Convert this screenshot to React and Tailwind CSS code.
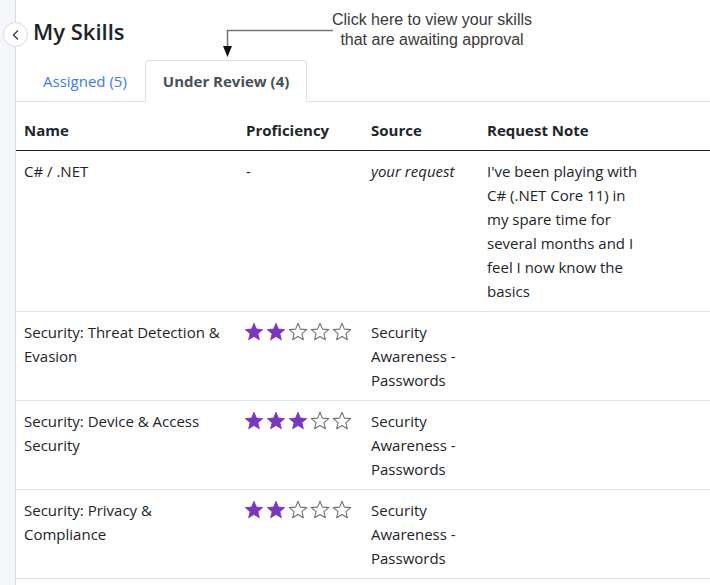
import React from "react";

const font = { fontFamily: '"Open Sans", "Noto Sans", sans-serif' };

function Star({ filled }) {
  return (
    <svg width="20" height="19" viewBox="0 0 24 23" className="shrink-0">
      <polygon
        points="12,1.5 14.9,8.6 22.5,9.2 16.7,14.1 18.5,21.5 12,17.5 5.5,21.5 7.3,14.1 1.5,9.2 9.1,8.6"
        fill={filled ? "#7a36bf" : "#ffffff"}
        stroke={filled ? "#7a36bf" : "#6f6f78"}
        strokeWidth={filled ? 1 : 1.3}
        strokeLinejoin="round"
      />
    </svg>
  );
}

function Stars({ n }) {
  return (
    <div className="flex gap-[2px] pt-[2px] ml-[-2px]">
      {[0, 1, 2, 3, 4].map((i) => (
        <Star key={i} filled={i < n} />
      ))}
    </div>
  );
}

const rows = [
  {
    name: "C# / .NET",
    prof: null,
    source: <i>your request</i>,
    note: "I've been playing with C# (.NET Core 11) in my spare time for several months and I feel I now know the basics",
  },
  { name: "Security: Threat Detection & Evasion", prof: 2, source: "Security Awareness - Passwords", note: "" },
  { name: "Security: Device & Access Security", prof: 3, source: "Security Awareness - Passwords", note: "" },
  { name: "Security: Privacy & Compliance", prof: 2, source: "Security Awareness - Passwords", note: "" },
];

export default function App() {
  return (
    <div className="relative flex w-[710px] h-[585px] overflow-hidden bg-white text-[#212529]" style={font}>
      <div className="w-[16px] shrink-0 bg-[#f5f6fa] border-r border-[#d8dae6]" />
      <div className="flex-1 flex flex-col min-w-0">
        <div className="h-[60px] flex items-start pt-[16px] pl-[17px]">
          <h1 className="text-[22px] leading-[30px] font-semibold text-[#1f2328]">My Skills</h1>
        </div>
        <div className="flex border-b border-[#dee2e6] pl-[9px] text-[15px] leading-[24px]">
          <div className="px-[17px] py-2 text-[#3b7bf5] mb-[-1px] border border-transparent">Assigned (5)</div>
          <div className="px-[17px] py-2 font-bold text-[#495057] bg-white border border-[#dee2e6] border-b-white rounded-t-[4px] mb-[-1px]">
            Under Review (4)
          </div>
        </div>
        <table className="mt-[8px] w-full table-fixed border-collapse text-[15px] leading-[24px]">
          <colgroup>
            <col className="w-[222px]" />
            <col className="w-[125px]" />
            <col className="w-[116px]" />
            <col className="w-[176px]" />
            <col />
          </colgroup>
          <thead>
            <tr className="border-b border-[#212529]">
              <th className="text-left font-bold px-2 py-2">Name</th>
              <th className="text-left font-bold px-2 py-2">Proficiency</th>
              <th className="text-left font-bold px-2 py-2">Source</th>
              <th className="text-left font-bold px-2 py-2 whitespace-nowrap">Request Note</th>
              <th />
            </tr>
          </thead>
          <tbody>
            {rows.map((r, i) => (
              <tr key={i} className="border-b border-[#dee2e6] align-top">
                <td className="px-2 py-2">{r.name}</td>
                <td className="px-2 py-2">{r.prof ? <Stars n={r.prof} /> : "-"}</td>
                <td className="px-2 py-2">{r.source}</td>
                <td className="px-2 py-2">{r.note}</td>
                <td />
              </tr>
            ))}
          </tbody>
        </table>
      </div>

      {/* back button */}
      <div className="absolute left-[3px] top-[22px] w-[25px] h-[25px] rounded-full bg-white border border-[#d8dae6] flex items-center justify-center">
        <svg width="10" height="12" viewBox="0 0 10 12">
          <polyline points="7,1.5 2.5,6 7,10.5" fill="none" stroke="#2d3a4a" strokeWidth="1.3" />
        </svg>
      </div>

      {/* annotation */}
      <div
        className="absolute left-[292px] top-[10px] w-[280px] text-center text-[16px] leading-[20px] text-[#3a3a3a]"
        style={{ fontFamily: '"Liberation Sans", Arial, sans-serif' }}
      >
        Click here to view your skills
        <br />
        that are awaiting approval
      </div>
      <svg className="absolute left-[220px] top-[26px]" width="115" height="34" viewBox="0 0 115 34">
        <polyline points="113,4.5 7.5,4.5 7.5,22" fill="none" stroke="#777777" strokeWidth="1.5" />
        <polygon points="3,20 12,20 7.5,31" fill="#111111" />
      </svg>
    </div>
  );
}
